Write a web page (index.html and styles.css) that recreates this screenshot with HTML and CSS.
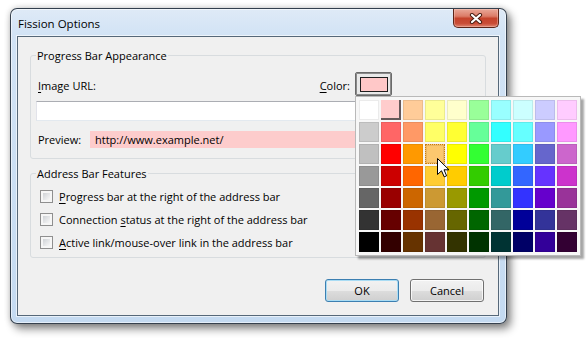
FILE: index.html
```html
<!DOCTYPE html>
<html lang="en">
<head>
<meta charset="UTF-8">
<title>Fission Options</title>
<link rel="stylesheet" href="styles.css">
</head>
<body>

<div class="window">
    <div class="titlebar">
        <span class="title">Fission Options</span>
        <button class="close-btn" aria-label="Close">
            <svg width="14" height="11" viewBox="0 0 14 11">
                <path d="M3 2 L11 9 M11 2 L3 9" stroke="#4a1d12" stroke-width="4.2" stroke-linecap="round"/>
                <path d="M3 2 L11 9 M11 2 L3 9" stroke="#fff" stroke-width="2.2" stroke-linecap="round"/>
            </svg>
        </button>
    </div>

    <div class="client">
        <!-- Progress bar group -->
        <fieldset class="group group-appearance">
            <legend>Progress Bar Appearance</legend>
            <div class="url-row">
                <label class="url-label"><u>I</u>mage URL:</label>
                <label class="color-label"><u>C</u>olor:</label>
                <button class="color-btn"><span class="swatch"></span></button>
            </div>
            <input type="text" class="url-input">
            <div class="preview-row">
                <span class="preview-label">Preview:</span>
                <span class="preview-box">http://www.example.net/</span>
            </div>
        </fieldset>

        <!-- Address bar group -->
        <fieldset class="group group-features">
            <legend>Address Bar Features</legend>
            <label class="check"><span class="box"></span><span><u>P</u>rogress bar at the right of the address bar</span></label>
            <label class="check"><span class="box"></span><span>Connection <u>s</u>tatus at the right of the address bar</span></label>
            <label class="check"><span class="box"></span><span><u>A</u>ctive link/mouse-over link in the address bar</span></label>
        </fieldset>

        <div class="actions">
            <button class="btn btn-default">OK</button>
            <button class="btn">Cancel</button>
        </div>
    </div>
</div>

<!-- colour picker popup -->
<div class="palette" id="palette"></div>

<svg class="cursor" width="13" height="20" viewBox="0 0 13 20">
    <path d="M0.5 0.5 L0.5 16.5 L4.5 12.8 L7.2 18.8 L9.6 17.8 L7 11.8 L12 11.8 Z" fill="#fff" stroke="#000" stroke-width="1" stroke-linejoin="miter"/>
</svg>

<script>
const colors = [
    '#FFFFFF', '#FFCCCC', '#FFCC99', '#FFFF99', '#FFFFCC', '#99FF99', '#99FFFF', '#CCFFFF', '#CCCCFF', '#FFCCFF',
    '#CCCCCC', '#FF6666', '#FF9966', '#FFFF66', '#FFFF33', '#66FF99', '#33FFFF', '#66FFFF', '#9999FF', '#FF99FF',
    '#C0C0C0', '#FF0000', '#FF9900', '#FFCC66', '#FFFF00', '#33FF33', '#66CCCC', '#33CCFF', '#6666CC', '#CC66CC',
    '#999999', '#CC0000', '#FF6600', '#FFCC33', '#FFCC00', '#33CC00', '#00CCCC', '#3366FF', '#6633FF', '#CC33CC',
    '#666666', '#990000', '#CC6600', '#CC9933', '#999900', '#009900', '#339999', '#3333FF', '#6600CC', '#993399',
    '#333333', '#660000', '#993300', '#996633', '#666600', '#006600', '#336666', '#000099', '#333399', '#663366',
    '#000000', '#330000', '#663300', '#663333', '#333300', '#003300', '#003333', '#000066', '#330099', '#330033'
];

const palette = document.getElementById('palette');
colors.forEach((c, i) => {
    const cell = document.createElement('span');
    cell.className = 'cell';
    cell.style.background = c;
    if (i === 1) cell.classList.add('selected');
    if (i === 23) cell.classList.add('hover');
    palette.appendChild(cell);
});
</script>
</body>
</html>
```

FILE: styles.css
```css
* {
    box-sizing: border-box;
}

body {
    margin: 0;
    width: 588px;
    height: 338px;
    overflow: hidden;
    background: #fff;
    font-family: 'Open Sans', 'Noto Sans', sans-serif;
    font-size: 11px;
    color: #000;
}

u {
    text-decoration-thickness: 1px;
    text-underline-offset: 2px;
}

/* window frame */
.window {
    margin: 8px 0 0 10px;
    width: 497px;
    height: 316px;
    display: flex;
    flex-direction: column;
    padding: 0 7px 7px 6px;
    border: 1px solid rgba(25, 35, 48, 0.85);
    border-radius: 7px;
    background: linear-gradient(#dfeaf7 0, #d2e3f5 26px, #c4daf1 100%);
    box-shadow: inset 0 0 0 1px rgba(255, 255, 255, 0.55),
                4px 5px 9px rgba(0, 0, 0, 0.45),
                0 0 6px rgba(0, 0, 0, 0.2);
}

.titlebar {
    height: 27px;
    display: flex;
    align-items: flex-start;
    justify-content: space-between;
}

.title {
    padding: 7px 0 0 1px;
    line-height: 15px;
    font-size: 11.5px;
}

.close-btn {
    width: 46px;
    height: 19px;
    padding: 0;
    display: flex;
    align-items: center;
    justify-content: center;
    border: 1px solid #5c2418;
    border-top: none;
    border-radius: 0 0 5px 5px;
    background: linear-gradient(#e9a899 0%, #dc7c68 40%, #c5432c 52%, #c94c36 80%, #df8470 100%);
    box-shadow: inset 0 0 0 1px rgba(255, 220, 210, 0.35);
}

.client {
    flex: 1;
    background: #f0f0f0;
    border: 1px solid #566879;
    box-shadow: 0 0 0 1px rgba(255, 255, 255, 0.6);
    padding: 11px 12px 0 12px;
}

/* group boxes */
.group {
    margin: 0;
    min-width: 0;
    border: 1px solid #d8dcdf;
    border-radius: 3px;
    padding: 9px 6px 10px 5px;
}

.group legend {
    padding: 0 1px;
    line-height: 15px;
}

.group-features {
    margin-top: 7px;
    padding: 4px 6px 3px 5px;
}

.url-row {
    width: 356px;
    height: 24px;
    display: flex;
    align-items: center;
}

.url-label {
    flex: 1;
    padding: 2px 0 0 2px;
}

.color-label {
    padding-top: 2px;
    margin-right: 5px;
}

.color-btn {
    width: 37px;
    height: 24px;
    padding: 0;
    display: flex;
    align-items: center;
    justify-content: center;
    border: 1px solid #6a6a6a;
    border-radius: 2px;
    background: #e9e9e9;
    box-shadow: inset 0 0 0 1px #8a8a8a;
}

.swatch {
    width: 28px;
    height: 15px;
    border: 1px solid #1e1e1e;
    background: #ffc8c8;
}

.url-input {
    display: block;
    width: 100%;
    height: 20px;
    margin: 5px 0 0;
    border: 1px solid;
    border-color: #abadb3 #dbdfe6 #e3e9ef #e2e3ea;
    background: #fff;
}

.preview-row {
    display: flex;
    align-items: center;
    margin-top: 10px;
    height: 17px;
}

.preview-label {
    width: 54px;
    padding-left: 2px;
}

.preview-box {
    flex: 1;
    height: 17px;
    line-height: 17px;
    padding-left: 5px;
    background: #fdcccc;
}

/* checkboxes */
.check {
    display: flex;
    align-items: center;
    height: 23px;
    padding-left: 4px;
    gap: 6px;
}

.box {
    width: 13px;
    height: 13px;
    flex-shrink: 0;
    border: 1px solid #8f8f8f;
    padding: 2px;
    background: linear-gradient(135deg, #cfd2d6, #f8f8f8) content-box, #f6f6f6;
}

/* dialog buttons */
.actions {
    display: flex;
    justify-content: flex-end;
    gap: 11px;
    margin-top: 21px;
    padding-right: 2px;
}

.btn {
    width: 74px;
    height: 23px;
    padding: 0;
    font-family: inherit;
    font-size: 11px;
    color: #000;
    border: 1px solid #707070;
    border-radius: 3px;
    background: linear-gradient(#f2f2f2 0%, #ebebeb 50%, #dddddd 51%, #cfcfcf 100%);
    box-shadow: inset 0 0 0 1px rgba(255, 255, 255, 0.75);
}

.btn-default {
    border-color: #3c7fb1;
    box-shadow: inset 0 0 0 1px #a9dcf4;
}

/* colour palette popup */
.palette {
    position: absolute;
    left: 355px;
    top: 96px;
    display: grid;
    grid-template-columns: repeat(10, 20px);
    grid-auto-rows: 20px;
    gap: 2px;
    padding: 3px;
    background: #f7f7f7;
    border: 1px solid #b9b9b9;
    box-shadow: 3px 3px 2px rgba(0, 0, 0, 0.35);
}

.cell {
    box-shadow: inset 0 0 0 1px rgba(0, 0, 0, 0.08);
}

.cell.selected {
    box-shadow: inset -2px -2px 0 rgba(50, 50, 50, 0.75);
}

.cell.hover {
    background: #fcc76e !important;
    border: 1px dotted #c77a10;
}

.cursor {
    position: absolute;
    left: 437px;
    top: 158px;
}
```
